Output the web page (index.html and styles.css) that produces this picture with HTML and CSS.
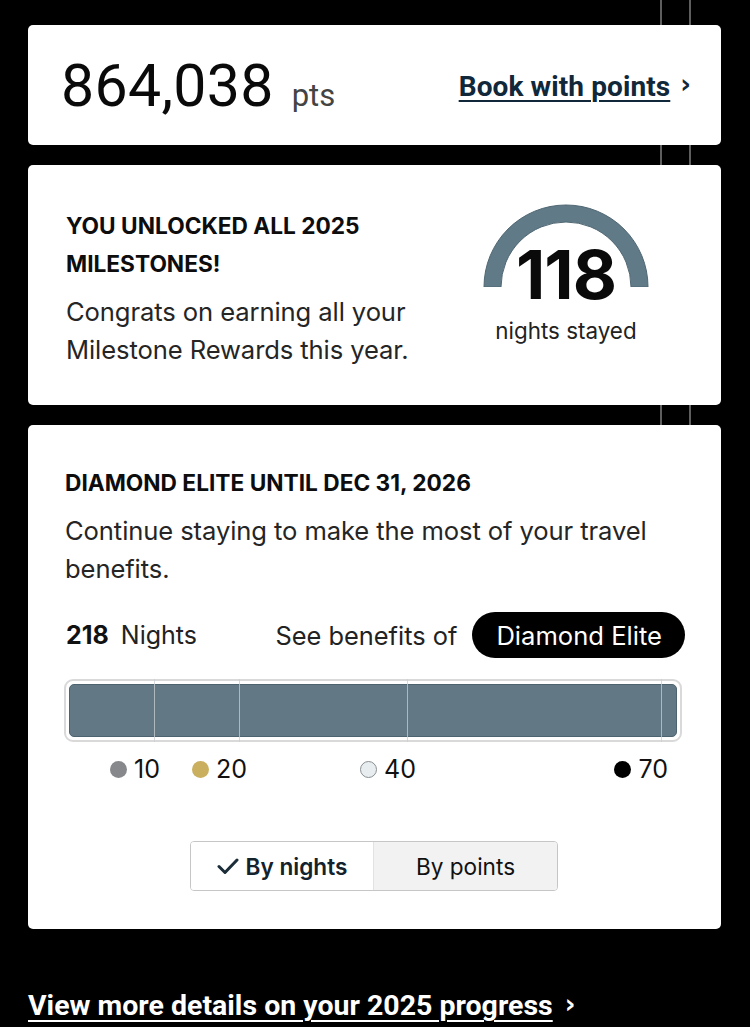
FILE: index.html
```html
<!DOCTYPE html>
<html lang="en">
<head>
<meta charset="utf-8">
<title>Points</title>
<link rel="stylesheet" href="styles.css">
</head>
<body>
<main class="page">
  <section class="card card-points">
    <div class="points"><span class="points-num">864,038</span><span class="points-unit">pts</span></div>
    <a class="book-link" href="#"><span class="book-text">Book with points</span><span class="chev">›</span></a>
  </section>

  <section class="card card-milestone">
    <div class="milestone-text">
      <h2 class="heading">YOU UNLOCKED ALL 2025 MILESTONES!</h2>
      <p class="body body-milestone">Congrats on earning all your Milestone Rewards this year.</p>
    </div>
    <div class="gauge">
      <svg class="gauge-arc" width="166" height="84" viewBox="0 0 166 84">
        <path d="M1 84 A82 82 0 0 1 165 84 L148 84 A65 65 0 0 0 18 84 Z" fill="#617a88" stroke="#4f6773" stroke-width="1"/>
      </svg>
      <div class="gauge-num">118</div>
      <div class="gauge-label">nights stayed</div>
    </div>
  </section>

  <section class="card card-status">
    <h2 class="heading">DIAMOND ELITE UNTIL DEC 31, 2026</h2>
    <p class="body body-status">Continue staying to make the most of your travel benefits.</p>
    <div class="nights-row">
      <div class="nights"><b>218</b> Nights</div>
      <div class="benefits">See benefits of <span class="pill">Diamond Elite</span></div>
    </div>
    <div class="bar">
      <div class="bar-fill"></div>
      <span class="tick" style="left:88px"></span>
      <span class="tick" style="left:173px"></span>
      <span class="tick" style="left:341px"></span>
      <span class="tick" style="left:595px"></span>
    </div>
    <div class="legend">
      <span class="mark" style="right:522px"><i class="dot dot-grey"></i>10</span>
      <span class="mark" style="right:435px"><i class="dot dot-gold"></i>20</span>
      <span class="mark" style="right:266px"><i class="dot dot-light"></i>40</span>
      <span class="mark" style="right:14px"><i class="dot dot-black"></i>70</span>
    </div>
    <div class="toggle">
      <button class="seg seg-active"><svg width="22" height="18" viewBox="0 0 22 18"><path d="M2 9.5 L8 15.5 L20 3" fill="none" stroke="#1b2d38" stroke-width="3" stroke-linecap="round" stroke-linejoin="round"/></svg>By nights</button>
      <button class="seg seg-off">By points</button>
    </div>
  </section>

  <a class="more-link" href="#"><span class="more-text">View more details on your 2025 progress</span><span class="chev chev-white">›</span></a>
</main>
</body>
</html>
```

FILE: styles.css
```css
html, body {
  margin: 0;
  padding: 0;
}
body {
  background-color: #000;
  background-image:
    linear-gradient(to right, transparent 660px, #5e5e5e 660px, #5e5e5e 662px, transparent 662px),
    linear-gradient(to right, transparent 689px, #5e5e5e 689px, #5e5e5e 691px, transparent 691px);
  background-size: 750px 425px;
  background-repeat: no-repeat;
  font-family: Inter, "Noto Sans", sans-serif;
  color: #111;
  height: 1027px;
  overflow: hidden;
}
.page {
  width: 693px;
  margin-left: 28px;
  padding-top: 25px;
  display: flex;
  flex-direction: column;
  gap: 20px;
}
.card {
  background: #fff;
  border-radius: 5px;
  box-sizing: border-box;
}
.card-points {
  height: 120px;
  display: flex;
  align-items: center;
  justify-content: space-between;
  padding: 0 30px 0 33px;
}
.points {
  display: flex;
  align-items: baseline;
  gap: 20px;
  font-family: Roboto, "Liberation Sans", sans-serif;
}
.points-num {
  font-size: 59px;
  color: #0a0a0a;
  letter-spacing: 0.3px;
}
.points-unit {
  font-size: 31px;
  color: #444;
  margin-left: -2px;
}
.book-link {
  display: flex;
  align-items: center;
  gap: 10px;
  text-decoration: none;
  color: #10283a;
  padding-top: 2px;
}
.book-text {
  font-family: Roboto, "Liberation Sans", sans-serif;
  font-weight: 700;
  font-size: 28px;
  letter-spacing: 0.1px;
  text-decoration: underline;
  text-decoration-thickness: 2px;
  text-underline-offset: 4px;
}
.chev {
  font-family: "DejaVu Sans", sans-serif;
  font-size: 26px;
  font-weight: 700;
  line-height: 1;
  margin-top: -4px;
}
.card-milestone {
  height: 240px;
  display: flex;
  justify-content: space-between;
  padding: 0 0 0 38px;
}
.milestone-text {
  padding-top: 42px;
  width: 370px;
}
.heading {
  margin: 0;
  font-size: 22.7px;
  font-weight: 700;
  line-height: 38px;
  letter-spacing: 0;
  color: #0d0d0d;
}
.card-milestone .heading {
  width: 330px;
}
.body {
  margin: 3px 0 0;
  font-size: 25.6px;
  line-height: 38px;
  color: #252525;
  font-weight: 400;
  letter-spacing: -0.1px;
}
.body-milestone {
  margin-top: 10px;
}
.gauge {
  width: 166px;
  margin-right: 72px;
  padding-top: 38px;
  display: flex;
  flex-direction: column;
  align-items: center;
  position: relative;
}
.gauge-arc {
  display: block;
}
.gauge-num {
  position: absolute;
  top: 75px;
  left: 0;
  right: 0;
  text-align: center;
  font-size: 68px;
  font-weight: 700;
  line-height: 1;
  letter-spacing: -1px;
  color: #0a0a0a;
}
.gauge-label {
  margin-top: 30px;
  font-size: 22.4px;
  color: #222;
}
.card-status {
  height: 504px;
  padding: 39px 37px 0 37px;
  display: flex;
  flex-direction: column;
}
.body-status {
  margin-top: 10px;
}
.nights-row {
  display: flex;
  justify-content: space-between;
  align-items: center;
  margin-top: 24px;
  margin-right: -1px;
}
.nights {
  font-size: 25px;
  color: #222;
  padding-left: 1px;
}
.nights b {
  font-weight: 700;
  color: #111;
  margin-right: 5px;
}
.benefits {
  font-size: 25.4px;
  color: #222;
  display: flex;
  align-items: center;
  gap: 15px;
}
.pill {
  background: #000;
  color: #fff;
  border-radius: 24px;
  padding: 0 23px 0 24px;
  height: 46px;
  display: inline-flex;
  align-items: center;
  font-size: 25.6px;
}
.bar {
  position: relative;
  margin-top: 21px;
  margin-left: -1px;
  width: 618px;
  height: 63px;
  box-sizing: border-box;
  border: 2px solid #d9d9d9;
  border-radius: 9px;
  padding: 3px;
}
.bar-fill {
  height: 100%;
  background: #627985;
  border: 1px solid #4d6470;
  border-radius: 5px;
  box-sizing: border-box;
}
.tick {
  position: absolute;
  top: -2px;
  bottom: -2px;
  width: 1px;
  background: rgba(200, 205, 208, 0.75);
}
.legend {
  position: relative;
  height: 54px;
  width: 618px;
  margin-left: -1px;
}
.mark {
  position: absolute;
  top: 10px;
  display: flex;
  align-items: center;
  gap: 7px;
  font-size: 25px;
  color: #111;
  line-height: 34px;
}
.dot {
  display: block;
  width: 17px;
  height: 17px;
  border-radius: 50%;
  box-sizing: border-box;
}
.dot-grey { background: #86888b; }
.dot-gold { background: #c9af5e; }
.dot-light { background: #e8eef0; border: 1.5px solid #8a8f92; }
.dot-black { background: #000; }
.toggle {
  align-self: center;
  margin-top: 45px;
  margin-left: -1px;
  display: flex;
  width: 368px;
  height: 50px;
  border: 1.5px solid #c6c6c6;
  border-radius: 4px;
  box-sizing: border-box;
  overflow: hidden;
}
.seg {
  border: 0;
  margin: 0;
  font-family: Inter, "Noto Sans", sans-serif;
  font-size: 22.6px;
  color: #111;
  display: flex;
  align-items: center;
  justify-content: center;
  gap: 7px;
  padding: 0;
}
.seg-active {
  width: 183px;
  background: #fff;
  font-weight: 600;
  color: #13222d;
  border-right: 1px solid #e2e2e2;
}
.seg-off {
  flex: 1;
  background: #f2f2f2;
  font-weight: 400;
}
.more-link {
  display: flex;
  align-items: center;
  gap: 12px;
  margin-top: 40px;
  color: #fff;
  text-decoration: none;
}
.more-text {
  font-family: Roboto, "Liberation Sans", sans-serif;
  font-weight: 700;
  font-size: 28.5px;
  letter-spacing: 0;
  text-decoration: underline;
  text-decoration-thickness: 2px;
  text-underline-offset: 5px;
}
.chev-white {
  color: #fff;
}
```
